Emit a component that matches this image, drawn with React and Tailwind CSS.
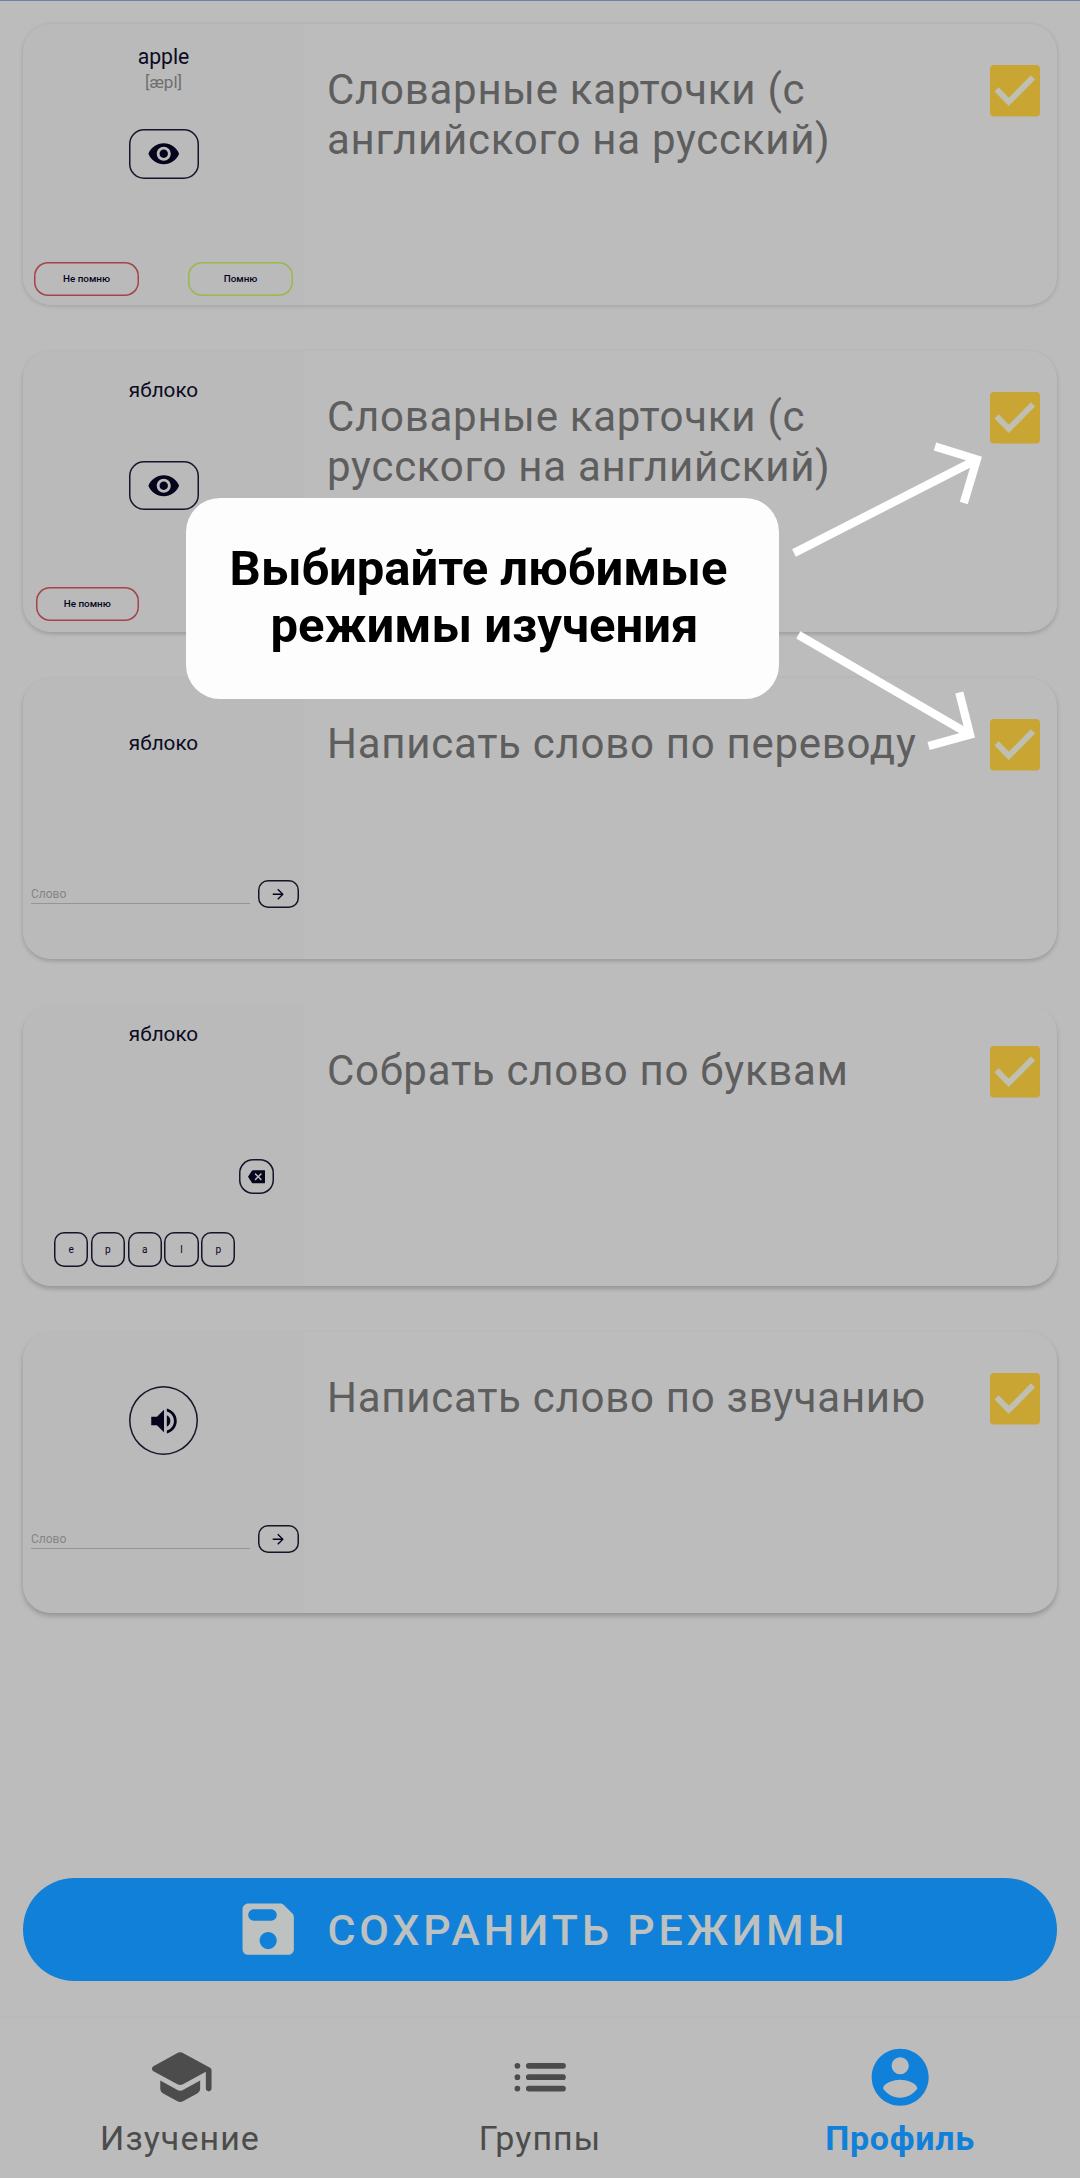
import React from "react";
import { MdVisibility, MdVolumeUp, MdBackspace, MdArrowForward } from "react-icons/md";

const INK = "shadow-[inset_0_0_0_1.5px_#15152a] text-[#04041c]";

function Word({ children, className }) {
  return (
    <div className={`text-center text-[20.7px] leading-6 text-[#0b0b22] ${className}`}>{children}</div>
  );
}

function EyeButton({ className }) {
  return (
    <div className={`mx-auto flex w-[70px] items-center justify-center rounded-[15px] ${INK} ${className}`}>
      <MdVisibility size={33.5} />
    </div>
  );
}

function Answer({ children, className }) {
  return (
    <div className={`flex h-[34px] items-center justify-center rounded-[14px] text-[9.9px] font-medium text-[#04041c] ${className}`}>
      {children}
    </div>
  );
}

function WordInput({ className }) {
  return (
    <div className={`flex h-7 items-center ${className}`}>
      <div className="ml-2 h-[19px] w-[219px] border-b border-[#92959e] pt-[2px] text-xs leading-[14px] text-[#858585]">Слово</div>
      <div className={`ml-2 flex h-7 w-[41px] items-center justify-center rounded-[10px] ${INK}`}>
        <MdArrowForward size={16.5} />
      </div>
    </div>
  );
}

function CardsFromEnglish() {
  return (
    <div className="flex h-full flex-col pt-[21px]">
      <div className="text-center text-[21.2px] leading-6 text-[#0b0b22]">apple</div>
      <div className="mt-[3px] text-center text-[17px] leading-5 text-[#6f6f6f]">[æpl]</div>
      <EyeButton className="mt-[37px] h-[50px]" />
      <div className="mt-[83px] flex justify-between pl-[11px] pr-[11px]">
        <Answer className="w-[105px] shadow-[inset_0_0_0_1.5px_#a4434a]">Не помню</Answer>
        <Answer className="w-[105px] shadow-[inset_0_0_0_1.5px_#9bb84a]">Помню</Answer>
      </div>
    </div>
  );
}

function CardsFromRussian() {
  return (
    <div className="flex h-full flex-col pt-[27px]">
      <Word>яблоко</Word>
      <EyeButton className="mt-[59px] h-[49px]" />
      <div className="mt-[77px] flex justify-between pl-[12.5px] pr-[11px]">
        <Answer className="w-[103.5px] shadow-[inset_0_0_0_1.5px_#a4434a]">Не помню</Answer>
        <Answer className="w-[103.5px] shadow-[inset_0_0_0_1.5px_#9bb84a]">Помню</Answer>
      </div>
    </div>
  );
}

function TypeTranslation() {
  return (
    <div className="flex h-full flex-col pt-[53px]">
      <Word>яблоко</Word>
      <WordInput className="mt-[125px]" />
    </div>
  );
}

function BuildFromLetters() {
  return (
    <div className="flex h-full flex-col pt-[17px]">
      <Word>яблоко</Word>
      <div className={`ml-[216px] mt-[113px] flex size-[35px] items-center justify-center rounded-[14px] ${INK}`}>
        <MdBackspace size={17.5} />
      </div>
      <div className="ml-[31px] mt-[38px] flex gap-[2.6px]">
        {["e", "p", "a", "l", "p"].map((letter, i) => (
          <div key={i} className={`flex h-[35px] w-[34.2px] items-center justify-center rounded-[10px] text-[10px] leading-none ${INK}`}>
            {letter}
          </div>
        ))}
      </div>
    </div>
  );
}

function TypeBySound() {
  return (
    <div className="flex h-full flex-col pt-[54px]">
      <div className={`mx-auto flex size-[69px] items-center justify-center rounded-full ${INK}`}>
        <MdVolumeUp size={34} />
      </div>
      <WordInput className="mt-[70px]" />
    </div>
  );
}

function CheckBox() {
  return (
    <svg className="mt-[41px] h-[52px] w-[50px] shrink-0" viewBox="0 0 50 52" fill="none">
      <rect width="50" height="51.4" rx="4" fill="#c9a533" />
      <path d="M6.6 24.4 18.8 36.8 43 12.4" stroke="#c0c0b2" strokeWidth="5.8" />
    </svg>
  );
}

const MODES = [
  { title: "Словарные карточки (с английского на русский)", Preview: CardsFromEnglish, shadow: "shadow-[0_1px_4px_rgba(0,0,0,0.16)]" },
  { title: "Словарные карточки (с русского на английский)", Preview: CardsFromRussian, shadow: "shadow-[0_2px_4px_rgba(0,0,0,0.18)]" },
  { title: "Написать слово по переводу", Preview: TypeTranslation, shadow: "shadow-[0_2px_4px_rgba(0,0,0,0.2)]" },
  { title: "Собрать слово по буквам", Preview: BuildFromLetters, shadow: "shadow-[0_3px_4px_rgba(0,0,0,0.2)]" },
  { title: "Написать слово по звучанию", Preview: TypeBySound, shadow: "shadow-[0_3px_5px_rgba(0,0,0,0.22)]" },
];

function ModeCard({ title, Preview, shadow }) {
  return (
    <div className={`flex h-[281px] rounded-[28px] bg-[#bcbcbc] ${shadow}`}>
      <div className="w-[281px] shrink-0 overflow-hidden rounded-l-[28px] bg-[#bababa]">
        <Preview />
      </div>
      <div className="ml-[23px] mt-[41px] w-[640px] text-[42px] leading-[50px] tracking-[0.73px] text-[#5e5e5e]">{title}</div>
      <div className="ml-auto mr-[17px]">
        <CheckBox />
      </div>
    </div>
  );
}

const SAVE =
  "M17.59 3.59c-.38-.38-.89-.59-1.42-.59H5c-1.11 0-2 .9-2 2v14c0 1.1.9 2 2 2h14c1.1 0 2-.9 2-2V7.83c0-.53-.21-1.04-.59-1.41l-2.82-2.83zM12 19c-1.66 0-3-1.34-3-3s1.34-3 3-3 3 1.34 3 3-1.34 3-3 3zm1-10H7c-1.1 0-2-.9-2-2s.9-2 2-2h6c1.1 0 2 .9 2 2s-.9 2-2 2z";
const SCHOOL =
  "M5 13.18v2.81c0 .73.4 1.41 1.04 1.76l5 2.73c.6.33 1.32.33 1.92 0l5-2.73c.64-.35 1.04-1.03 1.04-1.76v-2.81l-6.04 3.3c-.6.33-1.32.33-1.92 0L5 13.18zm6.04-9.66l-8.43 4.6c-.69.38-.69 1.38 0 1.76l8.43 4.6c.6.33 1.32.33 1.92 0L21 10.09V16c0 .55.45 1 1 1s1-.45 1-1V9.59c0-.37-.2-.7-.52-.88l-9.52-5.19c-.6-.32-1.32-.32-1.92 0z";
const LIST =
  "M4 7a1 1 0 1 0 0 2 1 1 0 0 0 0-2zm0 4a1 1 0 1 0 0 2 1 1 0 0 0 0-2zm0 4a1 1 0 1 0 0 2 1 1 0 0 0 0-2zM8 7a1 1 0 0 0 0 2h12a1 1 0 0 0 0-2zm0 4a1 1 0 0 0 0 2h12a1 1 0 0 0 0-2zm0 4a1 1 0 0 0 0 2h12a1 1 0 0 0 0-2z";
const ACCOUNT =
  "M12 2C6.48 2 2 6.48 2 12s4.48 10 10 10 10-4.48 10-10S17.52 2 12 2zm0 3c1.66 0 3 1.34 3 3s-1.34 3-3 3-3-1.34-3-3 1.34-3 3-3zm0 14.2c-2.5 0-4.71-1.28-6-3.22.03-1.99 4-3.08 6-3.08 1.99 0 5.97 1.09 6 3.08-1.29 1.94-3.5 3.22-6 3.22z";

function Icon({ d }) {
  return (
    <svg className="size-[68.4px] shrink-0" viewBox="0 0 24 24" fill="currentColor">
      <path d={d} />
    </svg>
  );
}

function NavItem({ icon, label, active }) {
  return (
    <div className={`flex flex-1 flex-col items-center pt-[24.5px] ${active ? "text-[#1180d8]" : "text-[#4c4c4c]"}`}>
      <Icon d={icon} />
      <div className={`mt-[7px] text-[34px] leading-[40px] ${active ? "font-bold tracking-[0.7px]" : "font-normal tracking-[1.05px]"}`}>{label}</div>
    </div>
  );
}

function Hint() {
  return (
    <>
      <div className="absolute left-[186px] top-[498px] flex h-[201px] w-[593px] flex-col items-center justify-center rounded-[34px] bg-[#fdfdfd] pb-[4px] text-[49px] font-bold leading-[57px] text-black">
        <div className="mr-[8px]">Выбирайте любимые</div>
        <div className="ml-[4px]">режимы изучения</div>
      </div>
      <svg className="absolute left-[780px] top-[430px] h-[340px] w-[220px]" viewBox="780 430 220 340" fill="none" stroke="#ffffff" strokeWidth="8.3">
        <path d="M794 553 975 460.5M935 446.5 976.8 459.4 963.8 503" />
        <path d="M798.3 634.8 968 733.5M959.3 692.5 970 734.5 928.6 746" />
      </svg>
    </>
  );
}

export default function App() {
  return (
    <div className="relative flex h-[2178px] w-[1080px] flex-col overflow-hidden bg-[#bcbcbc] font-['Roboto',sans-serif]">
      <div className="h-px w-full shrink-0 bg-[#6a83a8]" />
      <div className="flex flex-col gap-[46px] px-[23px] pt-[23px]">
        {MODES.map((mode) => (
          <ModeCard key={mode.title} {...mode} />
        ))}
      </div>
      <div className="mt-auto px-[23px]">
        <div className="flex h-[103px] items-center rounded-full bg-[#1180d8] pl-[211px] text-[#bdc1c0]">
          <Icon d={SAVE} />
          <div className="ml-[25px] pt-[2px] text-[43px] font-medium leading-none tracking-[3.84px]">СОХРАНИТЬ РЕЖИМЫ</div>
        </div>
      </div>
      <nav className="mt-[37px] flex h-[160px] shrink-0 bg-[#bcbcbc] shadow-[0_-1px_3px_rgba(0,0,0,0.025)]">
        <NavItem icon={SCHOOL} label="Изучение" />
        <NavItem icon={LIST} label="Группы" />
        <NavItem icon={ACCOUNT} label="Профиль" active />
      </nav>
      <Hint />
    </div>
  );
}
